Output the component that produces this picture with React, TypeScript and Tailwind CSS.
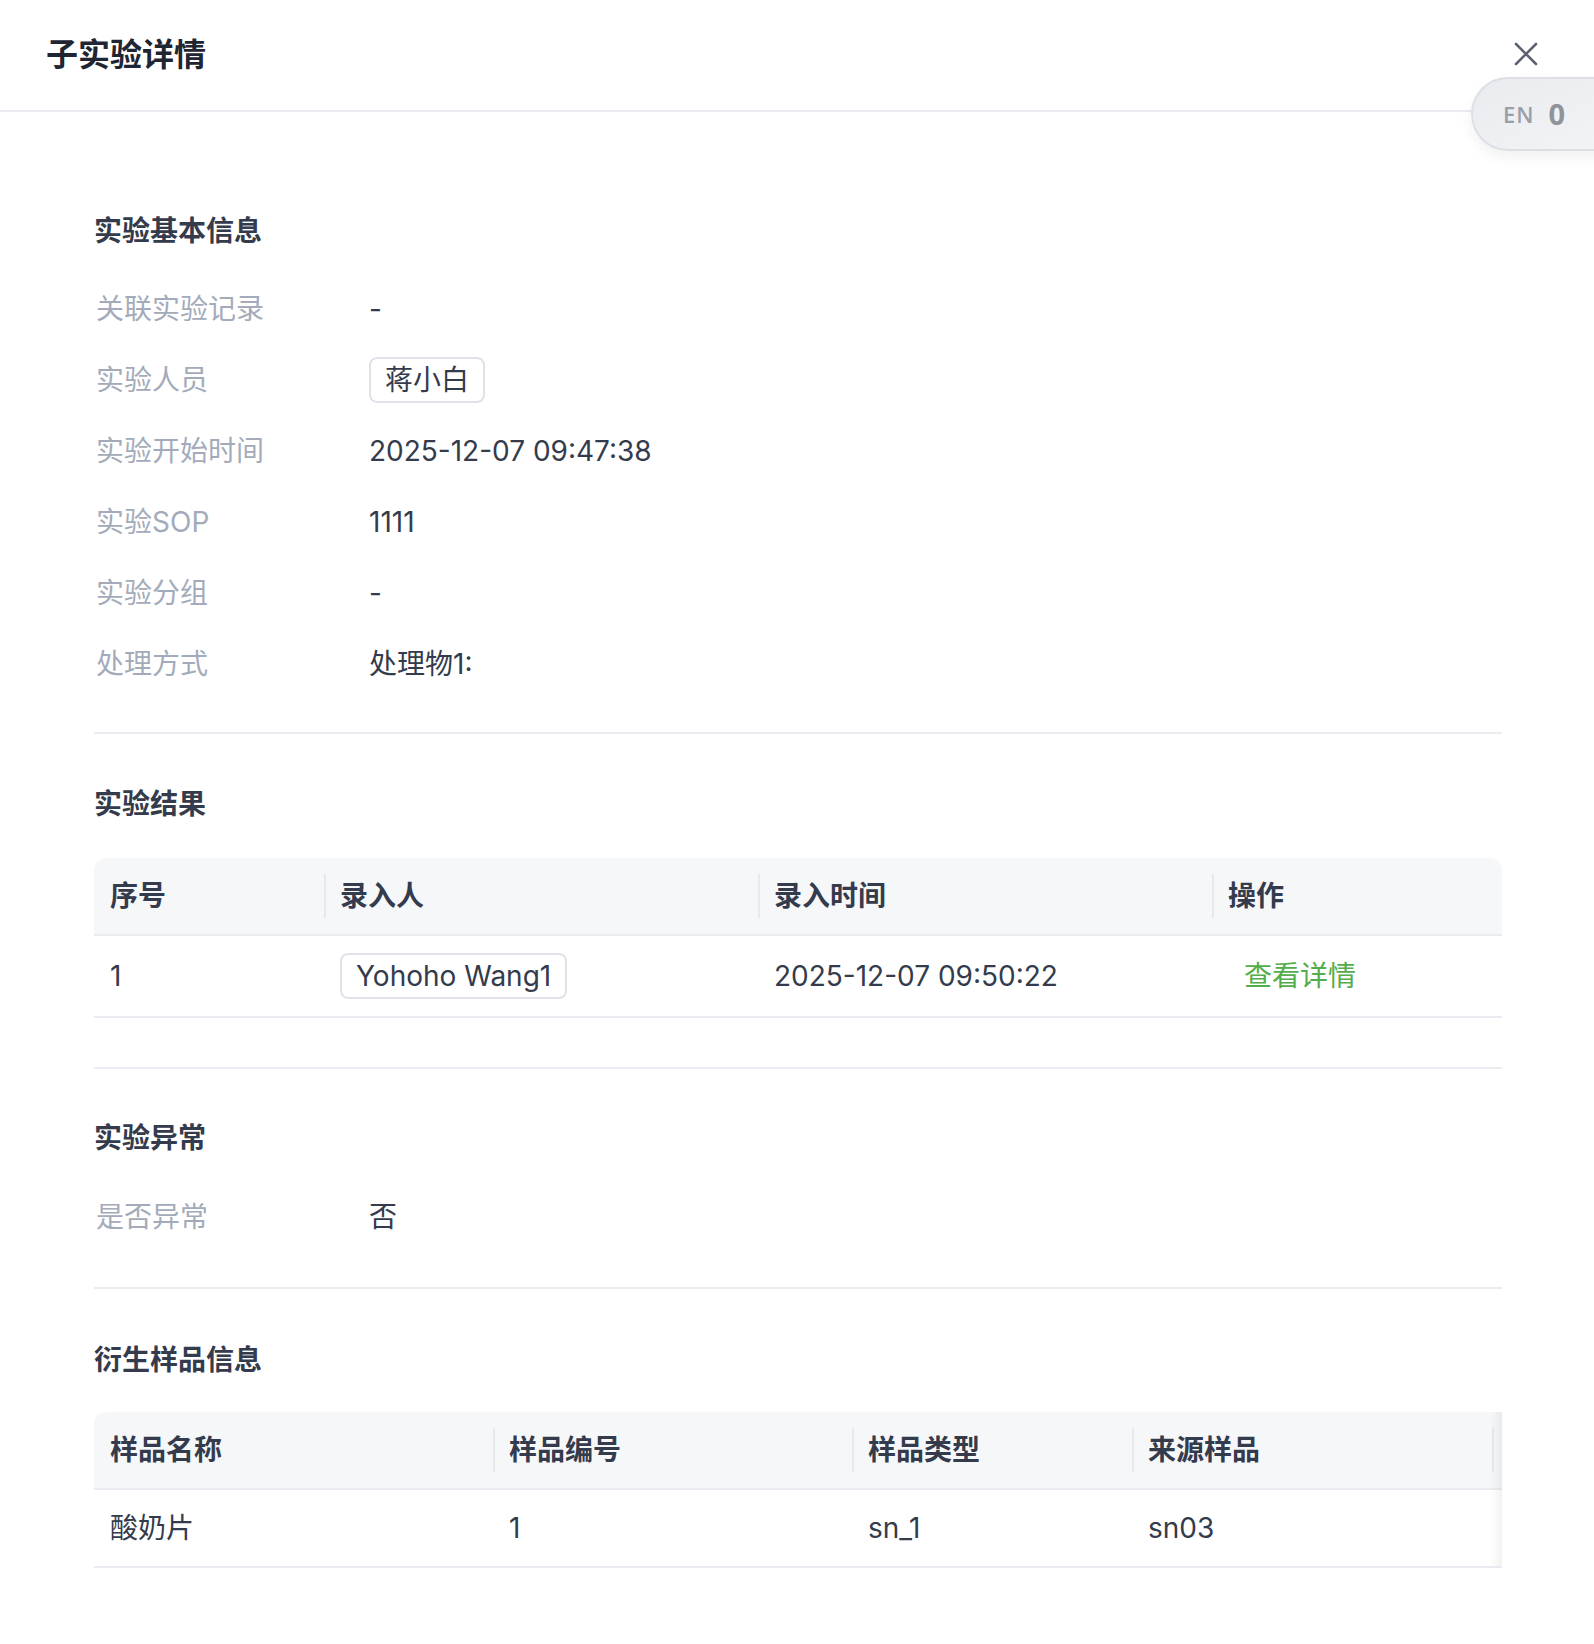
import { ReactNode } from 'react';

const FONT = { fontFamily: "Inter, 'Noto Sans CJK SC', 'Noto Sans', sans-serif" };

function SectionTitle({ children }: { children: ReactNode }) {
  return <div className="h-[40px] leading-[40px] text-[28px] font-semibold text-[#343b4c]">{children}</div>;
}

function InfoRow({ label, children }: { label: string; children: ReactNode }) {
  return (
    <div className="flex items-center h-[44px]">
      <div className="w-[275px] shrink-0 pl-[2px] text-[28px] text-[#a3abba]">{label}</div>
      <div className="text-[28px] text-[#343b4c]">{children}</div>
    </div>
  );
}

function Tag({ children }: { children: ReactNode }) {
  return (
    <span className="inline-flex items-center h-[46px] px-[14px] border-2 border-[#dfe3e9] rounded-[8px] text-[28px] text-[#343b4c] bg-white">
      {children}
    </span>
  );
}

function HeadCell({ children, width, divider = true }: { children: ReactNode; width: number; divider?: boolean }) {
  return (
    <div className="relative flex items-center px-[16px] shrink-0" style={{ width }}>
      {divider && <div className="absolute left-0 top-1/2 -translate-y-1/2 w-[2px] h-[45px] bg-[#e6e9ed]" />}
      <span className="text-[28px] font-semibold text-[#343b4c]">{children}</span>
    </div>
  );
}

function Cell({ children, width }: { children: ReactNode; width: number }) {
  return (
    <div className="flex items-center px-[16px] shrink-0 text-[28px] text-[#343b4c]" style={{ width }}>
      {children}
    </div>
  );
}

const RESULT_COLS = [230, 434, 454, 291];
const SAMPLE_COLS = [399, 359, 280, 360, 11];

export default function App() {
  return (
    <div className="relative w-[1594px] min-h-[1644px] bg-white overflow-hidden" style={FONT}>
      {/* Header */}
      <div className="flex items-center justify-between h-[112px] pl-[46px] pr-[55px] border-b-2 border-[#e8ebef]">
        <div className="text-[32px] font-semibold text-[#1f2533] leading-[40px]">子实验详情</div>
        <button className="w-[26px] h-[26px] flex items-center justify-center -mt-[2px]">
          <svg width="24" height="24" viewBox="0 0 24 24" fill="none" stroke="#5c6370" strokeWidth="2.6" strokeLinecap="round">
            <path d="M2 2 L22 22 M22 2 L2 22" />
          </svg>
        </button>
      </div>

      {/* Language pill */}
      <div className="absolute left-[1471px] top-[77px] w-[160px] h-[74px] rounded-l-[37px] border-2 border-[#dcdfe4] bg-gradient-to-br from-[#e9ebef] to-[#f3f4f6] shadow-[0_6px_14px_rgba(0,0,0,0.06)] flex items-center pl-[30px] gap-[14px]">
        <span className="text-[22px] font-semibold tracking-[1px] text-[#9a9ea8]" style={{ fontFamily: "'Open Sans', Inter, sans-serif" }}>EN</span>
        <span className="text-[29px] font-bold text-[#8e939c]" style={{ fontFamily: "'Open Sans', Inter, sans-serif" }}>0</span>
      </div>

      <div className="pl-[94px] pr-[92px]">
        {/* 实验基本信息 */}
        <div className="pt-[99px] pb-[46px] border-b-2 border-[#e9ecf0]">
          <SectionTitle>实验基本信息</SectionTitle>
          <div className="mt-[36px] flex flex-col gap-[27px]">
            <InfoRow label="关联实验记录">-</InfoRow>
            <InfoRow label="实验人员"><Tag>蒋小白</Tag></InfoRow>
            <InfoRow label="实验开始时间">2025-12-07 09:47:38</InfoRow>
            <InfoRow label="实验SOP">1111</InfoRow>
            <InfoRow label="实验分组">-</InfoRow>
            <InfoRow label="处理方式">处理物1:</InfoRow>
          </div>
        </div>

        {/* 实验结果 */}
        <div className="pt-[50px] pb-[49px] border-b-2 border-[#e9ecf0]">
          <SectionTitle>实验结果</SectionTitle>
          <div className="mt-[34px]">
            <div className="flex h-[78px] bg-[#f6f7f9] rounded-t-[12px] border-b-2 border-[#e8ebef]">
              <HeadCell width={RESULT_COLS[0]} divider={false}>序号</HeadCell>
              <HeadCell width={RESULT_COLS[1]}>录入人</HeadCell>
              <HeadCell width={RESULT_COLS[2]}>录入时间</HeadCell>
              <HeadCell width={RESULT_COLS[3]}>操作</HeadCell>
            </div>
            <div className="flex h-[82px] border-b-2 border-[#e8ebef]">
              <Cell width={RESULT_COLS[0]}>1</Cell>
              <Cell width={RESULT_COLS[1]}><Tag>Yohoho Wang1</Tag></Cell>
              <Cell width={RESULT_COLS[2]}>2025-12-07 09:50:22</Cell>
              <Cell width={RESULT_COLS[3]}>
                <span className="px-[16px] text-[#52ad4a]">查看详情</span>
              </Cell>
            </div>
          </div>
        </div>

        {/* 实验异常 */}
        <div className="pt-[49px] pb-[48px] border-b-2 border-[#e9ecf0]">
          <SectionTitle>实验异常</SectionTitle>
          <div className="mt-[37px]">
            <InfoRow label="是否异常">否</InfoRow>
          </div>
        </div>

        {/* 衍生样品信息 */}
        <div className="pt-[51px]">
          <SectionTitle>衍生样品信息</SectionTitle>
          <div className="relative mt-[32px] overflow-hidden">
            <div className="flex h-[78px] bg-[#f6f7f9] rounded-tl-[12px] border-b-2 border-[#e8ebef]">
              <HeadCell width={SAMPLE_COLS[0]} divider={false}>样品名称</HeadCell>
              <HeadCell width={SAMPLE_COLS[1]}>样品编号</HeadCell>
              <HeadCell width={SAMPLE_COLS[2]}>样品类型</HeadCell>
              <HeadCell width={SAMPLE_COLS[3]}>来源样品</HeadCell>
              <div className="relative shrink-0" style={{ width: SAMPLE_COLS[4] }}>
                <div className="absolute left-0 top-1/2 -translate-y-1/2 w-[2px] h-[45px] bg-[#e6e9ed]" />
              </div>
            </div>
            <div className="flex h-[78px] border-b-2 border-[#e8ebef]">
              <Cell width={SAMPLE_COLS[0]}>酸奶片</Cell>
              <Cell width={SAMPLE_COLS[1]}>1</Cell>
              <Cell width={SAMPLE_COLS[2]}>sn_1</Cell>
              <Cell width={SAMPLE_COLS[3]}>sn03</Cell>
            </div>
            <div className="absolute right-0 top-0 bottom-[2px] w-[12px] bg-gradient-to-l from-[rgba(0,0,0,0.05)] to-transparent" />
          </div>
        </div>
      </div>
    </div>
  );
}
